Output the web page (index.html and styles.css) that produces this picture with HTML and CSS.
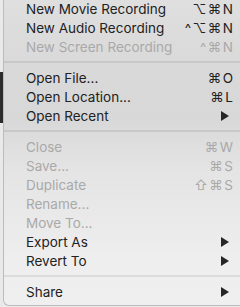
FILE: index.html
```html
<!DOCTYPE html>
<html>
<head>
<title>File menu</title>
<link rel="stylesheet" href="styles.css">
</head>
<body>
<div class="desk">
<div class="edge"></div>
<div class="menu">
<div class="item"><span class="label">New Movie Recording</span><span class="key">⌥⌘N</span></div>
<div class="item"><span class="label">New Audio Recording</span><span class="key">^⌥⌘N</span></div>
<div class="item off"><span class="label">New Screen Recording</span><span class="key">^⌘N</span></div>
<div class="sep"></div>
<div class="item"><span class="label">Open File...</span><span class="key">⌘O</span></div>
<div class="item"><span class="label">Open Location...</span><span class="key">⌘L</span></div>
<div class="item"><span class="label">Open Recent</span><span class="arrow"></span></div>
<div class="sep"></div>
<div class="item off"><span class="label">Close</span><span class="key">⌘W</span></div>
<div class="item off"><span class="label">Save...</span><span class="key">⌘S</span></div>
<div class="item off"><span class="label">Duplicate</span><span class="key">⇧⌘S</span></div>
<div class="item off"><span class="label">Rename...</span></div>
<div class="item off"><span class="label">Move To...</span></div>
<div class="item"><span class="label">Export As</span><span class="arrow"></span></div>
<div class="item"><span class="label">Revert To</span><span class="arrow"></span></div>
<div class="sep"></div>
<div class="item"><span class="label">Share</span><span class="arrow"></span></div>
</div>
</div>
</body>
</html>
```
FILE: styles.css
```css
/* Menu sheet for the File menu */

html, body
{ margin: 0;
padding: 0;
background-color: #ebebeb;
}

div.desk
{ display: flex;
height: 307px;
overflow: hidden;
}

div.edge
{ width: 3px;
flex: none;
background: linear-gradient(#e9e9e9 0, #e9e9e9 72px, #2c2c2c 72px, #2c2c2c 123px, #e9e9e9 123px);
}

div.menu
{ flex: 1;
align-self: flex-start;
margin-top: -1px;
padding-bottom: 4px;
border-left: 1px solid #bcbcbc;
border-bottom: 1px solid #bcbcbc;
border-bottom-left-radius: 6px;
background: linear-gradient(#dfdfdf 0, #d9d9d9 70px, #d8d8d8 120px, #e4e4e4 170px, #eeeeee 260px, #efefef 100%);
font-family: "Inter", "DejaVu Sans", sans-serif;
font-size: 13.5px;
color: #222222;
}

div.item
{ display: flex;
align-items: center;
height: 19px;
padding-left: 22px;
padding-right: 7px;
}

div.item span.label
{ flex: 1;
white-space: nowrap;
}

div.off
{ color: #a9a9a9;
}

span.key
{ letter-spacing: 1.5px;
margin-right: -1.5px;
}

span.arrow
{ width: 0;
height: 0;
margin-right: 4px;
border-left: 8px solid #262626;
border-top: 5px solid transparent;
border-bottom: 5px solid transparent;
}

div.sep
{ height: 12px;
display: flex;
align-items: center;
}

div.sep::before
{ content: "";
flex: 1;
height: 2px;
background-color: rgba(0, 0, 0, 0.08);
}
```
